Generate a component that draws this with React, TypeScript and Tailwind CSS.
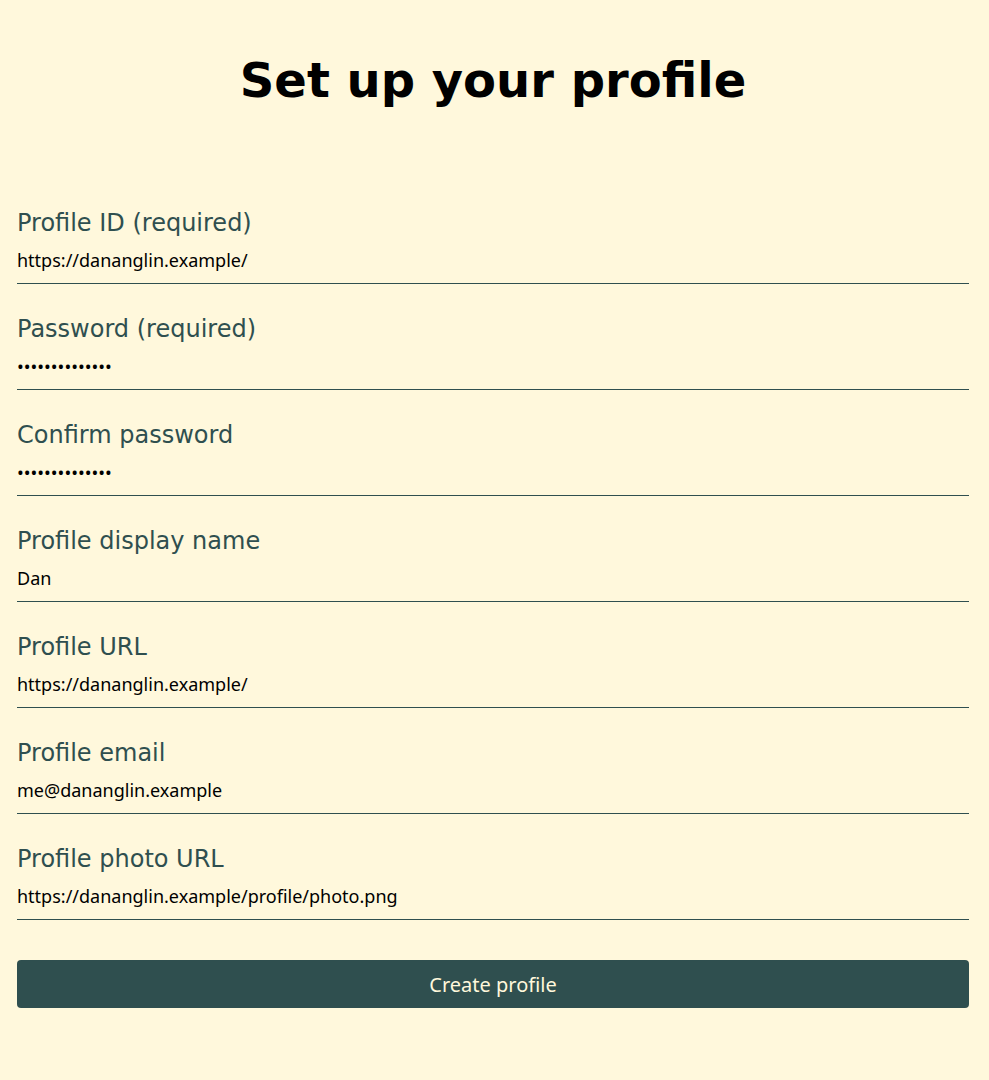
import { useState } from 'react';

const fields = [
  { id: 'profile_id', label: 'Profile ID (required)', type: 'text', value: 'https://dananglin.example/' },
  { id: 'password', label: 'Password (required)', type: 'password', value: 'correcthorse12' },
  { id: 'confirm_password', label: 'Confirm password', type: 'password', value: 'correcthorse12' },
  { id: 'display_name', label: 'Profile display name', type: 'text', value: 'Dan' },
  { id: 'profile_url', label: 'Profile URL', type: 'text', value: 'https://dananglin.example/' },
  { id: 'email', label: 'Profile email', type: 'email', value: 'me@dananglin.example' },
  { id: 'photo_url', label: 'Profile photo URL', type: 'text', value: 'https://dananglin.example/profile/photo.png' },
];

export default function App() {
  const [formData, setFormData] = useState<Record<string, string>>(
    Object.fromEntries(fields.map((f) => [f.id, f.value]))
  );

  return (
    <div className="min-h-[1080px] bg-[#fff8dc] pl-[17px] pr-[20px] font-['Noto_Sans',sans-serif]">
      <h1 className="pt-[56px] text-center font-['DejaVu_Sans',sans-serif] text-[48px] leading-[48px] font-bold text-black">
        Set up your profile
      </h1>

      <form className="mt-[100px]" onSubmit={(e) => e.preventDefault()}>
        {fields.map((f) => (
          <div key={f.id} className="mb-[26px]">
            <label
              htmlFor={f.id}
              className="block pt-[2px] font-['DejaVu_Sans',sans-serif] text-[24px] leading-[34px] text-[#2f4f4f]"
            >
              {f.label}
            </label>
            <input
              id={f.id}
              type={f.type}
              value={formData[f.id]}
              onChange={(e) => setFormData({ ...formData, [f.id]: e.target.value })}
              className="block h-[44px] w-full border-b border-[#2f4f4f] bg-transparent p-0 pb-[4px] text-[18px] text-black outline-none"
            />
          </div>
        ))}

        <button
          type="submit"
          className="mt-[40px] block h-[48px] w-full rounded-[4px] bg-[#2f4f4f] pt-[2px] text-[20px] text-[#fff8dc]"
        >
          Create profile
        </button>
      </form>
    </div>
  );
}
